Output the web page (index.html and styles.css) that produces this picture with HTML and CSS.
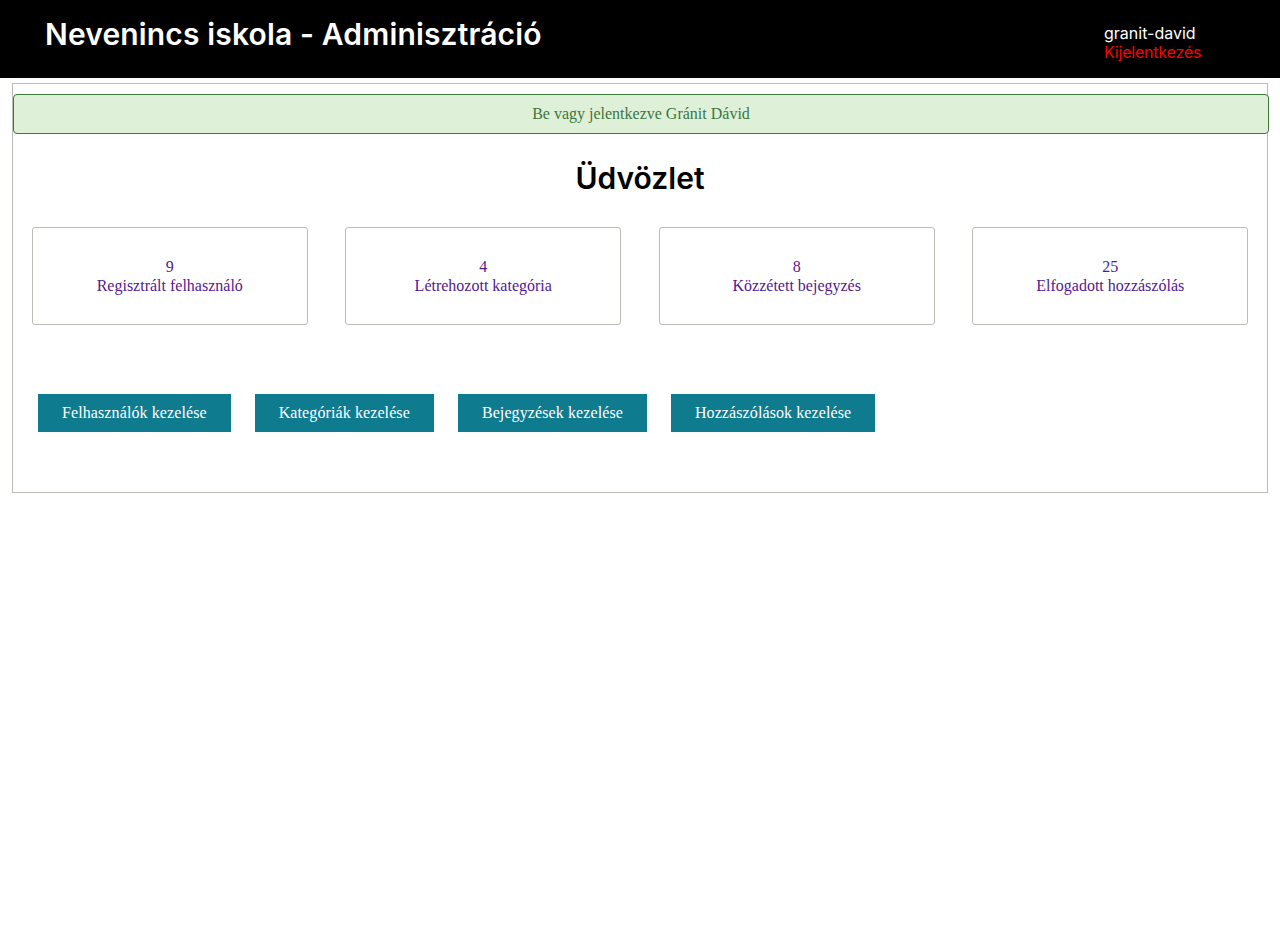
FILE: index.html
```html
<!DOCTYPE html>
<html lang="hu">
<head>
<meta charset="utf-8">
<title>Nevenincs iskola - Adminisztráció</title>
<link rel="stylesheet" href="styles.css">
</head>
<body>
<header class="topbar">
  <h1 class="site-title">Nevenincs iskola - Adminisztráció</h1>
  <div class="user-box">
    <div class="user-name">granit-david</div>
    <a class="logout" href="#">Kijelentkezés</a>
  </div>
</header>
<main class="panel">
  <div class="alert">Be vagy jelentkezve Gránit Dávid</div>
  <h2 class="welcome">Üdvözlet</h2>
  <div class="stats">
    <a class="stat" href="#"><span>9</span><span>Regisztrált felhasználó</span></a>
    <a class="stat" href="#"><span>4</span><span>Létrehozott kategória</span></a>
    <a class="stat" href="#"><span>8</span><span>Közzétett bejegyzés</span></a>
    <a class="stat" href="#"><span>25</span><span>Elfogadott hozzászólás</span></a>
  </div>
  <div class="actions">
    <a class="btn" href="#">Felhasználók kezelése</a>
    <a class="btn" href="#">Kategóriák kezelése</a>
    <a class="btn" href="#">Bejegyzések kezelése</a>
    <a class="btn" href="#">Hozzászólások kezelése</a>
  </div>
</main>
</body>
</html>
```

FILE: styles.css
```css
html, body {
  margin: 0;
  padding: 0;
  background: #fff;
  font-family: "Liberation Serif", "Times New Roman", serif;
  font-size: 16px;
}

.topbar {
  background: #000;
  height: 78px;
  display: flex;
  align-items: flex-start;
  justify-content: space-between;
  padding: 0 79px 0 45px;
  box-sizing: border-box;
}

.site-title {
  margin: 15px 0 0 0;
  font-family: "Inter", "Noto Sans", sans-serif;
  font-weight: 600;
  font-size: 30px;
  line-height: 38px;
  color: #fff;
  letter-spacing: 0.15px;
}

.user-box {
  margin-top: 24px;
  width: 97px;
  font-family: "Inter", "Noto Sans", sans-serif;
  font-size: 16px;
  line-height: 19px;
}

.user-name {
  color: #fff;
}

.logout {
  color: #f00;
  text-decoration: none;
  letter-spacing: -0.2px;
}

.panel {
  margin: 5px 12px 0 12px;
  border: 1px solid #bdbdb5;
  padding: 10px 0 60px 0;
}

.alert {
  margin-right: -2px;
  background: #dff0d8;
  border: 1px solid #3c7a3c;
  border-radius: 4px;
  color: #3c763d;
  text-align: center;
  height: 40px;
  box-sizing: border-box;
  line-height: 38px;
}

.welcome {
  margin: 24px 0 0 0;
  text-align: center;
  font-family: "Inter", "Noto Sans", sans-serif;
  font-weight: 600;
  font-size: 30px;
  line-height: 40px;
  color: #000;
}

.stats {
  display: flex;
  justify-content: space-around;
  margin-top: 29px;
}

.stat {
  width: 22%;
  height: 98px;
  box-sizing: border-box;
  border: 1px solid #bdbdb5;
  border-radius: 3px;
  display: flex;
  flex-direction: column;
  align-items: center;
  justify-content: center;
  color: #55188f;
  text-decoration: none;
  line-height: 19px;
}

.actions {
  display: flex;
  gap: 24px;
  padding-left: 25px;
  margin-top: 69px;
}

.btn {
  background: #0f7b8f;
  color: #fff;
  text-decoration: none;
  height: 38px;
  line-height: 38px;
  padding: 0 24px;
  letter-spacing: 0.1px;
}
```
